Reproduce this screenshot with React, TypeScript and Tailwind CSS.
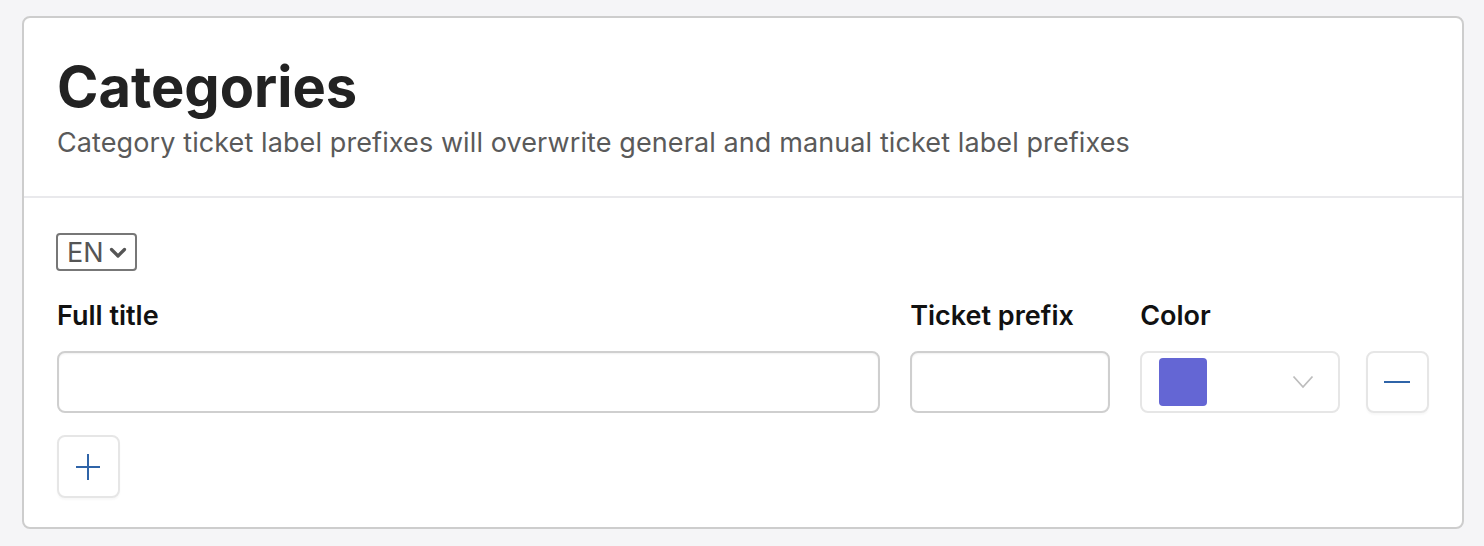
import React from "react";

export default function App() {
  return (
    <div className="min-h-[546px] w-full bg-[#f5f5f7] pl-[22px] pr-[20px] pt-[16px] pb-[17px]" style={{ fontFamily: "Inter, 'Noto Sans', sans-serif" }}>
      <div className="w-[1442px] h-[513px] rounded-[8px] border-2 border-[#cdcdcd] bg-white flex flex-col">
        <div className="px-[33px] pt-[39px] pb-[35px] border-b-2 border-[#e9e9ec]">
          <h1 className="text-[56px] leading-[60px] font-bold text-[#222]">Categories</h1>
          <p className="text-[27px] leading-[36px] text-[#5a5a5a] mt-[8px] tracking-[0.1px]">
            Category ticket label prefixes will overwrite general and manual ticket label prefixes
          </p>
        </div>
        <div className="px-[33px] pt-[35px]">
          <div className="inline-flex items-center h-[38px] w-[81px] rounded-[4px] border-2 border-[#777] pl-[9px] gap-[5px] ml-[-1px]">
            <span className="text-[27px] leading-none text-[#555]">EN</span>
            <svg width="18" height="12" viewBox="0 0 18 12" className="mt-[1px]">
              <path d="M2.5 2.5 L9 9 L15.5 2.5" fill="none" stroke="#555" strokeWidth="3.2" strokeLinecap="round" strokeLinejoin="round" />
            </svg>
          </div>
          <div className="flex mt-[28px]">
            <div className="w-[824px] mr-[30px] flex flex-col">
              <label className="text-[27px] leading-[34px] font-semibold text-[#111]">Full title</label>
              <input className="mt-[18px] h-[62px] rounded-[8px] border-2 border-[#cfcfcf] shadow-[inset_0_1px_2px_rgba(0,0,0,0.06)] bg-white" />
            </div>
            <div className="w-[200px] mr-[30px] flex flex-col">
              <label className="text-[27px] leading-[34px] font-semibold text-[#111]">Ticket prefix</label>
              <input className="mt-[18px] h-[62px] rounded-[8px] border-2 border-[#cfcfcf] shadow-[inset_0_1px_2px_rgba(0,0,0,0.06)] bg-white" />
            </div>
            <div className="w-[200px] mr-[26px] flex flex-col">
              <label className="text-[27px] leading-[34px] font-semibold text-[#111]">Color</label>
              <div className="mt-[18px] h-[62px] rounded-[8px] border-2 border-[#e6e6e6] bg-white flex items-center pl-[17px] pr-[24px] justify-between">
                <div className="w-[48px] h-[48px] rounded-[4px] bg-[#6466d4]" />
                <svg width="22" height="14" viewBox="0 0 22 14">
                  <path d="M1.5 1.5 L11 12 L20.5 1.5" fill="none" stroke="#bdbdbd" strokeWidth="1.8" />
                </svg>
              </div>
            </div>
            <div className="flex flex-col justify-end">
              <button className="w-[63px] h-[62px] rounded-[8px] border-2 border-[#e6e6e6] bg-white flex items-center justify-center shadow-[0_2px_2px_rgba(0,0,0,0.03)]">
                <svg width="26" height="4" viewBox="0 0 26 4">
                  <rect x="0" y="1" width="26" height="2" fill="#2f64a8" />
                </svg>
              </button>
            </div>
          </div>
          <button className="mt-[22px] w-[63px] h-[63px] rounded-[8px] border-2 border-[#e6e6e6] bg-white flex items-center justify-center shadow-[0_2px_2px_rgba(0,0,0,0.03)]">
            <svg width="26" height="26" viewBox="0 0 26 26">
              <rect x="0" y="12" width="24" height="2" fill="#2f64a8" />
              <rect x="11" y="0" width="2" height="26" fill="#2f64a8" />
            </svg>
          </button>
        </div>
      </div>
    </div>
  );
}
